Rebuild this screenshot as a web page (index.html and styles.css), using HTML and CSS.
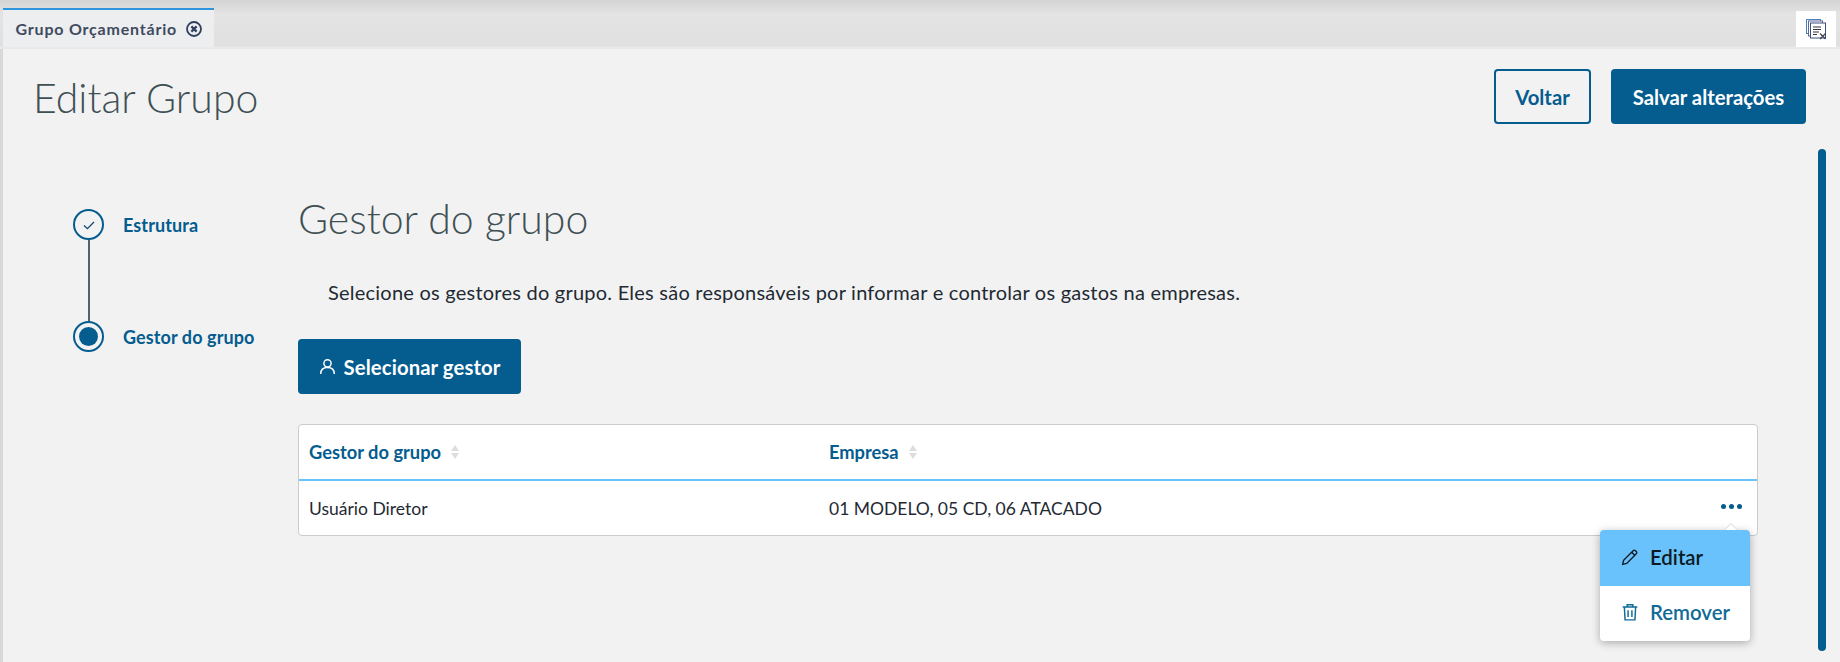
FILE: index.html
```html
<!DOCTYPE html>
<html lang="pt-BR">
<head>
<meta charset="utf-8">
<title>Editar Grupo</title>
<link rel="stylesheet" href="styles.css">
</head>
<body>
<div class="app">
  <header class="tabbar">
    <div class="tab">
      <span class="tab-label">Grupo Orçamentário</span>
      <svg class="tab-close" viewBox="0 0 16 16" width="16" height="16"><circle cx="8" cy="8" r="7" fill="none" stroke="#2f3f5c" stroke-width="1.800"/><path d="M5.400 5.400l5.200 5.200M10.600 5.400l-5.200 5.200" stroke="#2f3f5c" stroke-width="2.200" fill="none"/></svg>
    </div>
    <div class="tab-tool">
      <svg viewBox="0 0 22 22" width="22" height="22"><rect x="1.500" y="1.500" width="14" height="14" fill="#fff" stroke="#4a7fc0"/><rect x="3.500" y="3" width="14" height="15" fill="#fff" stroke="#5a6a9a"/><rect x="5.500" y="5" width="15" height="15" fill="#fff" stroke="#3f4f7f"/><path d="M8 9h8M8 11.500h8M8 14h6M8 16.500h4" stroke="#333" fill="none"/><path d="M15 15.500l5.500 5.500M20.500 15.500L15 21" stroke="#445" stroke-width="1.300" fill="none"/></svg>
    </div>
  </header>
  <main class="page">
    <div class="page-head">
      <h1 class="page-title">Editar Grupo</h1>
      <div class="page-actions">
        <button class="btn btn-outline btn-voltar">Voltar</button>
        <button class="btn btn-solid btn-salvar">Salvar alterações</button>
      </div>
    </div>
    <div class="page-body">
      <nav class="stepper">
        <div class="step">
          <span class="step-dot"><svg viewBox="0 0 16 16" width="16" height="16"><path d="M3 8.500l3.400 3.200L13 5" fill="none" stroke="#0c4a6e" stroke-width="1.300"/></svg></span>
          <span class="step-label">Estrutura</span>
        </div>
        <div class="step-line"></div>
        <div class="step">
          <span class="step-dot"><span class="step-fill"></span></span>
          <span class="step-label">Gestor do grupo</span>
        </div>
      </nav>
      <section class="main">
        <h2 class="section-title">Gestor do grupo</h2>
        <p class="section-desc">Selecione os gestores do grupo. Eles são responsáveis por informar e controlar os gastos na empresas.</p>
        <button class="btn btn-solid btn-select">
          <svg viewBox="0 0 16 16" width="17" height="17"><circle cx="8" cy="5" r="3.400" fill="none" stroke="#fff" stroke-width="1.400"/><path d="M1.600 15c0-3.800 2.600-6 6.400-6s6.400 2.200 6.400 6" fill="none" stroke="#fff" stroke-width="1.400"/></svg>
          Selecionar gestor
        </button>
        <div class="table">
          <div class="row row-head">
            <div class="col-a th">Gestor do grupo<svg class="sort" viewBox="0 0 8 14" width="8" height="14"><path d="M4 0l4 6H0zM0 8h8l-4 6z" fill="#ddd"/></svg></div>
            <div class="col-b th">Empresa<svg class="sort" viewBox="0 0 8 14" width="8" height="14"><path d="M4 0l4 6H0zM0 8h8l-4 6z" fill="#ddd"/></svg></div>
          </div>
          <div class="row row-data">
            <div class="col-a">Usuário Diretor</div>
            <div class="col-b">01 MODELO, 05 CD, 06 ATACADO</div>
            <div class="more"><i></i><i></i><i></i></div>
          </div>
          <div class="menu">
            <div class="menu-arrow"></div>
            <div class="menu-item menu-active">
              <svg viewBox="0 0 16 16" width="18" height="18"><path d="M1.500 14.500l.8-3.600L10.800 2.400c.6-.6 1.400-.6 2 0l.8.8c.6.6.6 1.400 0 2l-8.500 8.500z" fill="none" stroke="#0b1a24" stroke-width="1.200"/><path d="M9.500 3.800l2.700 2.700" stroke="#0b1a24" stroke-width="1.200"/></svg>
              Editar
            </div>
            <div class="menu-item">
              <svg viewBox="0 0 16 16" width="18" height="18"><path d="M1.500 3.500h13M5.500 3.500V1.500h5v2M3 3.500l.6 11.500h8.800l.6-11.500M6.300 6.500v6M9.700 6.500v6" fill="none" stroke="#0f6a96" stroke-width="1.300"/></svg>
              Remover
            </div>
          </div>
        </div>
      </section>
    </div>
    <div class="scrollbar"></div>
  </main>
</div>
</body>
</html>
```
FILE: styles.css
```css
* { box-sizing: border-box; }
html, body { margin: 0; height: 100%; }
body { font-family: "Lato", "Open Sans", sans-serif; background: #f2f2f2; overflow: hidden; }
.app { width: 1840px; height: 662px; display: flex; flex-direction: column; background: linear-gradient(90deg, #d8d8d8 0, #d8d8d8 3px, #f2f2f2 3px); }
.tabbar { height: 49px; flex: none; padding: 8px 4px 2px 3px; display: flex; justify-content: space-between; background: linear-gradient(#d4d4d4, #e4e4e4 14px, #e0e0e0 46px, #e9e9e9 47px); }
.tab { width: 211px; height: 39px; background: #edeef0; border-top: 2px solid #2e95dc; display: flex; align-items: center; padding-left: 12.500px; gap: 9px; }
.tab-label { font-size: 16px; font-weight: 700; color: #3f4a5e; letter-spacing: .8px; }
.tab-tool { width: 40px; height: 36px; margin-top: 3px; background: #fff; display: flex; align-items: center; justify-content: center; }
.page { flex: 1; position: relative; padding-left: 3px; }
.page-head { display: flex; justify-content: space-between; padding: 20px 34px 0 30px; }
.page-title { margin: 0; font-size: 41px; line-height: 57px; font-weight: 300; color: #3f5055; }
.page-actions { display: flex; gap: 20px; }
.btn { font-family: inherit; font-size: 20.300px; font-weight: 700; height: 55px; border-radius: 4px; display: flex; align-items: center; justify-content: center; padding: 0; }
.btn-outline { background: transparent; border: 2px solid #045c8f; color: #045c8f; }
.btn-solid { background: #045c8f; border: 0; color: #fff; }
.btn-voltar { width: 97px; }
.btn-salvar { width: 195px; }
.page-body { display: flex; padding: 24px 0 0 70px; }
.stepper { width: 225px; padding-top: 59px; flex: none; }
.step { display: flex; align-items: center; gap: 19px; height: 31px; }
.step-dot { width: 31px; height: 31px; border: 2px solid #045c8f; border-radius: 50%; display: flex; align-items: center; justify-content: center; flex: none; }
.step-fill { width: 19px; height: 19px; border-radius: 50%; background: #045c8f; }
.step-label { font-size: 18px; font-weight: 700; color: #045c8f; letter-spacing: .1px; }
.step-line { width: 2px; height: 81px; margin-left: 14.500px; background: #4d6470; }
.main { width: 1460px; }
.section-title { margin: 0; font-size: 41px; line-height: 57px; font-weight: 300; color: #3f5055; padding-top: 40px; box-sizing: content-box; }
.section-desc { margin: 32px 0 0; font-size: 20px; line-height: 26px; color: #1f2a33; padding-left: 30px; letter-spacing: .23px; }
.btn-select { width: 223px; margin-top: 34px; gap: 8px; letter-spacing: .1px; }
.table { position: relative; margin-top: 30px; height: 112px; background: #fff; border: 1px solid #ccc; border-radius: 4px; }
.row { display: flex; align-items: center; padding-left: 10px; }
.row-head { height: 56px; border-bottom: 2px solid #6ac2fc; }
.row-data { height: 54px; position: relative; font-size: 17.500px; color: #1f2a33; }
.col-a { width: 520px; }
.th { font-size: 18.300px; font-weight: 700; color: #045c8f; display: flex; align-items: center; }
.sort { margin-left: 10px; }
.more { position: absolute; right: 15px; top: 23px; display: flex; gap: 3px; }
.more i { width: 5px; height: 5px; border-radius: 50%; background: #045c8f; }
.menu { position: absolute; left: 1301px; top: 105px; width: 150px; height: 111px; background: #fff; border-radius: 4px; box-shadow: 0 2px 8px rgba(0,0,0,.3); }
.menu-arrow { position: absolute; right: 14px; top: -5px; width: 10px; height: 10px; background: #fff; border: 1px solid #ddd; transform: rotate(45deg); }
.menu-item { position: relative; height: 55.500px; display: flex; align-items: center; gap: 11px; padding-left: 21px; padding-bottom: 2px; font-size: 20.400px; font-weight: 600; color: #0f6a96; }
.menu-active { background: #6ac2fc; color: #0b1a24; border-radius: 4px 4px 0 0; }
.scrollbar { position: absolute; left: 1818px; top: 100px; width: 8px; height: 502px; border-radius: 4px; background: #045c8f; }
```
